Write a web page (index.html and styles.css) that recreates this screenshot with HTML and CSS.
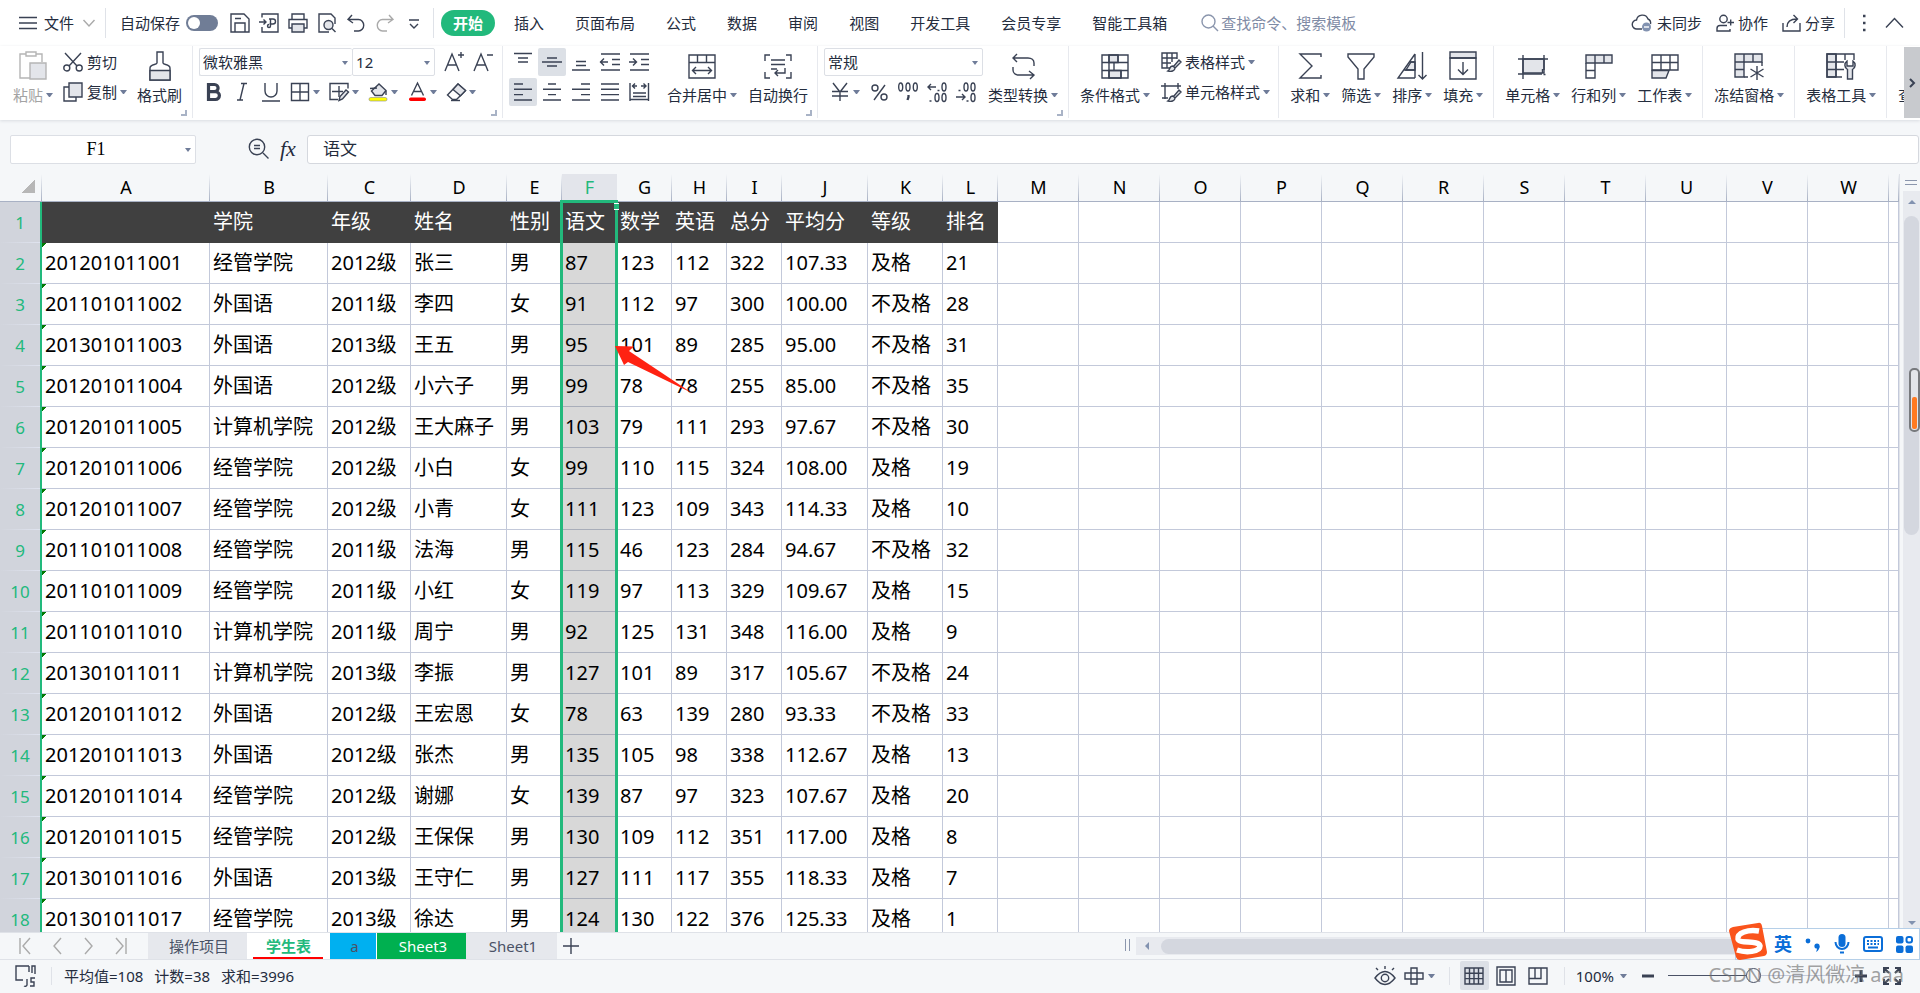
FILE: index.html
```html
<!DOCTYPE html>
<html lang="zh-CN">
<head>
<meta charset="utf-8">
<title>学生表</title>
<link rel="stylesheet" href="styles.css">
</head>
<body>
<header class="topbar">
  <button class="file"><svg class="i" width="20" height="16" viewBox="0 0 20 16"><path d="M1 2.5h18M1 8h18M1 13.5h18"/></svg><span>文件</span><svg class="i faint" width="14" height="10" viewBox="0 0 14 10"><path d="M1.5 2l5.500 6 5.500-6"/></svg></button>
  <span class="sep"></span>
  <label class="autosave">自动保存<input type="checkbox" class="toggle"></label>
  <div class="quick">
    <button aria-label="保存"><svg class="i" width="20" height="20" viewBox="0 0 20 20"><path d="M1 1h13l5 5v13H1zM5 19v-9h10v9M5 5.500h6"/></svg></button>
    <button aria-label="输出为PDF"><svg class="i" width="20" height="20" viewBox="0 0 20 20"><path d="M3 4.500V1h16v18H3v-5M0 9h7M4.500 6.500L7 9l-2.500 2.500M10 6h4a2.500 2.500 0 0 1 0 5h-3.500M11.500 6v7a1.500 1.500 0 1 1-1.500-1.500"/></svg></button>
    <button aria-label="打印"><svg class="i" width="20" height="20" viewBox="0 0 20 20"><path d="M4 6V1h12v5M4 15H1V6.500h18V15h-3"/><path class="f" d="M4 11h12v8H4z"/></svg></button>
    <button aria-label="打印预览"><svg class="i" width="20" height="20" viewBox="0 0 20 20"><path d="M12 19H2V1h12l4 4v6"/><circle class="f" cx="11.500" cy="12" r="4.500"/><path d="M15 15.500l3.500 3.500"/></svg></button>
    <button aria-label="撤销"><svg class="i" width="20" height="20" viewBox="0 0 20 20"><path d="M6 2L2 6.500 7 10M2 6.500h10.500a5 5.500 0 0 1 0 11.500H8"/></svg></button>
    <button aria-label="恢复" class="faint"><svg class="i" width="20" height="20" viewBox="0 0 20 20"><path d="M14 2l4 4.500L13 10M18 6.500H7.500a5 5.500 0 0 0 0 11.500H12"/></svg></button>
    <button aria-label="更多"><svg class="i" width="20" height="20" viewBox="0 0 20 20"><path d="M5 7h10M6 11l4 4 4-4"/></svg></button>
  </div>
  <span class="sep"></span>
  <nav class="tabs">
    <button class="on">开始</button><button>插入</button><button>页面布局</button><button>公式</button><button>数据</button><button>审阅</button><button>视图</button><button>开发工具</button><button>会员专享</button><button>智能工具箱</button>
  </nav>
  <label class="search"><svg class="i" width="18" height="18" viewBox="0 0 18 18"><circle cx="7.500" cy="7.500" r="6.500"/><path d="M12 12l5 5"/></svg><input type="text" placeholder="查找命令、搜索模板" aria-label="查找命令"></label>
  <div class="account">
    <button><svg class="i" width="22" height="18" viewBox="0 0 22 18"><path d="M11 15H6a4.500 4.500 0 0 1-.5-9 6 6 0 0 1 11.500-1 4.500 4.500 0 0 1 2.500 5"/><circle cx="15.500" cy="13" r="4.500" fill="#8292b0" stroke="none"/><path stroke="#fff" d="M13 13h5"/></svg>未同步</button>
    <button><svg class="i" width="18" height="18" viewBox="0 0 18 18"><circle cx="7.500" cy="5" r="3.700"/><path d="M11 11.500H4a3 3 0 0 0-3 3V17h13v-2M11.500 8.500H18M14.700 5.500v6"/></svg>协作</button>
    <button><svg class="i" width="19" height="18" viewBox="0 0 19 18"><path d="M1 9v8h17V9M5 13c0-5 3-8 10-8M11.500 1l4 4-4 4"/></svg>分享</button>
    <span class="sep"></span>
    <button class="dots" aria-label="更多选项"><svg class="i" width="6" height="18" viewBox="0 0 6 18"><path stroke-width="2.500" d="M2 2h2.500M2 9h2.500M2 16h2.500"/></svg></button>
    <button aria-label="收起功能区"><svg class="i" width="19" height="12" viewBox="0 0 19 12"><path d="M1 10.500l8.500-9 8.500 9"/></svg></button>
  </div>
</header>

<section class="ribbon">
  <div class="group clip launch">
    <button class="big dim"><svg class="i" width="28" height="30" viewBox="0 0 28 30"><path d="M7 3H1v24h10M17 3h6v8M7 1h10v4H7z"/><path class="f" d="M11 12h16v16H11z"/></svg><span class="dd">粘贴</span></button>
    <div class="stack">
      <button class="row"><svg class="i" width="20" height="20" viewBox="0 0 20 20"><path d="M2 1l12 13M18 1L6 14"/><circle cx="3.800" cy="16" r="3"/><circle cx="16.200" cy="16" r="3"/></svg><span>剪切</span></button>
      <button class="row"><svg class="i" width="20" height="20" viewBox="0 0 20 20"><path d="M6 5H1v14h12v-4"/><path class="f" d="M6 1h13v14H6z"/></svg><span class="dd">复制</span></button>
    </div>
    <button class="big"><svg class="i" width="24" height="30" viewBox="0 0 24 30"><path d="M9 1h6v11c0 2 7 1 7 5v12H2V17c0-4 7-3 7-5z"/><path class="f" d="M2 19.500h20V29H2z"/></svg><span>格式刷</span></button>
  </div>

  <div class="group font launch">
    <div class="stack">
      <div class="line">
        <span class="pick name"><select aria-label="字体"><option>微软雅黑</option></select></span><span class="pick size"><select aria-label="字号"><option>12</option></select></span>
        <button class="ico grow" aria-label="增大字号"><svg class="i" width="20" height="20" viewBox="0 0 20 20"><path d="M1 19L8 2l7 17M3.500 13h9M17 0v6M14 3h6"/></svg></button>
        <button class="ico" aria-label="减小字号"><svg class="i" width="20" height="20" viewBox="0 0 20 20"><path d="M1 19L8 2l7 17M3.500 13h9M14 3h6"/></svg></button>
      </div>
      <div class="line tools">
        <button class="ico" aria-label="加粗"><svg class="i" width="20" height="20" viewBox="0 0 20 20"><path stroke-width="3.200" d="M5.500 2.500h6a3.600 3.600 0 0 1 0 7.200h-6zM5.500 9.700h7a3.800 3.800 0 0 1 0 7.800h-7z"/></svg></button>
        <button class="ico" aria-label="倾斜"><svg class="i" width="20" height="20" viewBox="0 0 20 20"><path d="M9 1.500h6M5 18h6M12 1.500L8 18"/></svg></button>
        <button class="ico" aria-label="下划线"><svg class="i" width="20" height="20" viewBox="0 0 20 20"><path d="M4 1v8a6 6 0 0 0 12 0V1M1 19h18"/></svg></button>
        <button class="ico dd" aria-label="边框"><svg class="i" width="20" height="20" viewBox="0 0 20 20"><path d="M1.500 1.500h17v17h-17zM10 1.500v17M1.500 10h17"/></svg></button>
        <button class="ico dd" aria-label="绘图边框"><svg class="i" width="20" height="20" viewBox="0 0 20 20"><path d="M9 17.500H1V1.500h18v5M3 9.500h11M10 4v11" /><path class="f" d="M10 18.500l1-4L17 8l2.500 2-6 7z"/></svg></button>
        <button class="ico dd" aria-label="填充颜色"><svg class="i" width="20" height="20" viewBox="0 0 20 20"><path class="f" d="M3.500 9L11 2l7 6.500-4 5H7z"/><path d="M2 6.500l7-.5M18 9v4"/><rect x="1" y="15.500" width="18" height="3.500" rx="1.700" fill="#ff0" stroke="#888" stroke-width=".6"/></svg></button>
        <button class="ico dd" aria-label="字体颜色"><svg class="i" width="20" height="20" viewBox="0 0 20 20"><path d="M4.500 13.500L10.500 1l6 12.500M6.500 9.500h8"/><rect x="2" y="15.500" width="17" height="3.500" rx="1.700" fill="red" stroke="none"/></svg></button>
        <button class="ico dd" aria-label="清除"><svg class="i" width="20" height="20" viewBox="0 0 20 20"><path d="M6.500 17.500L1.500 13 12 2l7.500 6.500-9 9z"/><path class="f" d="M7 7.500L12 2l7.500 6.500-5 5.200z"/><path d="M5 18.500h9"/></svg></button>
      </div>
    </div>
  </div>

  <div class="group align launch">
    <div class="alignset">
      <button aria-label="顶端对齐"><svg class="i" width="20" height="20" viewBox="0 0 20 20"><path d="M1 1.500h18M5 6h10M5 10h10"/></svg></button>
      <button class="on" aria-label="垂直居中"><svg class="i" width="20" height="20" viewBox="0 0 20 20"><path d="M0 10h20M5 6h10M5 14h10"/></svg></button>
      <button aria-label="底端对齐"><svg class="i" width="20" height="20" viewBox="0 0 20 20"><path d="M1 18h18M5 9.500h10M5 13.500h10"/></svg></button>
      <button aria-label="减少缩进"><svg class="i" width="20" height="20" viewBox="0 0 20 20"><path d="M1 2h19M12 7.500h8M12 12.500h8M1 18h19M0 10h8M4 6.500L.5 10 4 13.500"/></svg></button>
      <button aria-label="增加缩进"><svg class="i" width="20" height="20" viewBox="0 0 20 20"><path d="M1 2h19M12 7.500h8M12 12.500h8M1 18h19M0 10h7.500M4 6.500L7.500 10 4 13.500"/></svg></button>
      <button class="on" aria-label="左对齐"><svg class="i" width="20" height="20" viewBox="0 0 20 20"><path d="M1 2h9M1 7.300h18M1 12.600h9M1 18h18"/></svg></button>
      <button aria-label="水平居中"><svg class="i" width="20" height="20" viewBox="0 0 20 20"><path d="M6 2h8M1 7.300h18M6 12.600h8M1 18h18"/></svg></button>
      <button aria-label="右对齐"><svg class="i" width="20" height="20" viewBox="0 0 20 20"><path d="M10 2h9M1 7.300h18M10 12.600h9M1 18h18"/></svg></button>
      <button aria-label="两端对齐"><svg class="i" width="20" height="20" viewBox="0 0 20 20"><path d="M1 2h18M1 7.300h18M1 12.600h18M1 18h18"/></svg></button>
      <button aria-label="分散对齐"><svg class="i" width="20" height="20" viewBox="0 0 20 20"><path d="M1 1v18M19.500 1v18M3 4h5M12 4h5M6 1.500L3.500 4 6 6.500M14.500 1.500L17 4l-2.500 2.500M4 11h13M4 14.500h13M1 17.500h18"/></svg></button>
    </div>
    <button class="big"><svg class="i" width="28" height="30" viewBox="0 0 28 30"><path d="M1 4h26v23H1zM1 11.500h26M9.500 4v7.500M18.500 4v7.500M5 19.500h18M8 16l-3.500 3.500L8 23M20 16l3.500 3.500L20 23"/></svg><span class="dd">合并居中</span></button>
    <button class="big"><svg class="i" width="28" height="30" viewBox="0 0 28 30"><path d="M1 10V4h5M22 4h5v6M1 21v6h5M22 27h5v-6M7 9h14M7 13.500h14M7 18h6M21 17v5H11M14 19l-3 3 3 3"/></svg><span>自动换行</span></button>
  </div>

  <div class="group number launch">
    <div class="stack">
      <div class="line"><span class="pick fmt"><select aria-label="数字格式"><option>常规</option></select></span></div>
      <div class="line tools">
        <button class="ico dd" aria-label="货币"><svg class="i" width="20" height="20" viewBox="0 0 20 20"><path d="M3 1l7 9 7-9M10 9v10M2 9.500h16M2 14h16"/></svg></button>
        <button class="ico" aria-label="百分比"><svg class="i" width="20" height="20" viewBox="0 0 20 20"><circle cx="6" cy="6" r="3"/><circle cx="15" cy="15" r="3"/><path d="M16 3L5 18"/></svg></button>
        <button class="ico" aria-label="千位分隔"><svg class="i" width="20" height="20" viewBox="0 0 20 20"><ellipse cx="2.700" cy="5" rx="2" ry="4"/><ellipse cx="10" cy="5" rx="2" ry="4"/><ellipse cx="17.300" cy="5" rx="2" ry="4"/><path stroke-width="2.300" d="M10.500 13v2l-1 3"/></svg></button>
        <button class="ico" aria-label="增加小数位"><svg class="i" width="20" height="20" viewBox="0 0 20 20"><path d="M1 5h8M4 2L1 5l3 3M10.500 8.500h2M2.500 19h2"/><ellipse cx="17" cy="5" rx="2" ry="4"/><ellipse cx="10" cy="15.500" rx="2" ry="4"/><ellipse cx="17" cy="15.500" rx="2" ry="4"/></svg></button>
        <button class="ico" aria-label="减少小数位"><svg class="i" width="20" height="20" viewBox="0 0 20 20"><path d="M0 15h9M6 12l3 3-3 3M10.500 19h2M2.500 8.500h2"/><ellipse cx="10" cy="5" rx="2" ry="4"/><ellipse cx="17" cy="5" rx="2" ry="4"/><ellipse cx="17" cy="15.500" rx="2" ry="4"/></svg></button>
      </div>
    </div>
    <button class="big"><svg class="i" width="28" height="30" viewBox="0 0 28 30"><path d="M8 3L4 7l4 4M4 7h15c3.500 0 6 2 6 5v3M20 20l5 4-4 4M25 24H10c-3.500 0-6-2-6-5v-3"/></svg><span class="dd">类型转换</span></button>
  </div>

  <div class="group styles">
    <button class="big"><svg class="i" width="28" height="30" viewBox="0 0 28 30"><path class="f" d="M8 4h9v7.500H8zM8 19.500h12V27H8z"/><path d="M1 4h26v23H1zM1 11.500h26M1 19.500h26M8 4v23M17 4v7.500M13 11.500v8M20 19.500V27"/></svg><span class="dd">条件格式</span></button>
    <div class="stack">
      <button class="row"><svg class="i" width="20" height="20" viewBox="0 0 20 20"><path d="M9 16H1V1h15v6M1 6h15M1 11h9M6 1v15M11 1v9"/><path class="f" d="M7 19c2-1 1-5 5-5l2 2c0 3-4 4-7 3zM13 14l5-6 2 2-6 6"/></svg><span class="dd">表格样式</span></button>
      <button class="row"><svg class="i" width="20" height="20" viewBox="0 0 20 20"><path d="M0 4h20M4 1v16M17 1v6M1 16h6"/><path class="f" d="M7 19c2-1 1-5 5-5l2 2c0 3-4 4-7 3zM13 14l5-6 2 2-6 6"/></svg><span class="dd">单元格样式</span></button>
    </div>
  </div>

  <div class="group">
    <button class="big"><svg class="i" width="28" height="30" viewBox="0 0 28 30"><path d="M25 6V3H4l12 12L4 27h21v-3"/></svg><span class="dd">求和</span></button>
    <button class="big"><svg class="i" width="28" height="30" viewBox="0 0 28 30"><path d="M1 3h26v3L17 18v10h-6V18L1 6z"/></svg><span class="dd">筛选</span></button>
    <button class="big"><svg class="i" width="28" height="30" viewBox="0 0 28 30"><path class="f" d="M13 11h4v8H8z"/><path d="M17 3v24M17 3L0 27h17M6 19h11M11.500 11H17M24.500 1v27M20.500 24l4 4 4-4"/></svg><span class="dd">排序</span></button>
    <button class="big"><svg class="i" width="28" height="30" viewBox="0 0 28 30"><path class="f" d="M1 1h26v6H1z"/><path d="M1 7h26v21H1zM14 11v12M9 18.500l5 5 5-5"/></svg><span class="dd">填充</span></button>
  </div>

  <div class="group">
    <button class="big"><svg class="i" width="30" height="30" viewBox="0 0 30 30"><path class="f" d="M5 8h21v14H5z"/><path d="M0 8h30M5 4v24M26 4v15M0 23h24M25.500 23.500h2M24.500 18v4"/></svg><span class="dd">单元格</span></button>
    <button class="big"><svg class="i" width="28" height="30" viewBox="0 0 28 30"><path class="f" d="M1 4h26v8H1z"/><path d="M10 4v23H1V12M19 4v8M1 19.500h9"/></svg><span class="dd">行和列</span></button>
    <button class="big"><svg class="i" width="28" height="30" viewBox="0 0 28 30"><path d="M1 4h26v15H1zM1 11.500h26M10 4v15M19 4v15"/><path class="f" d="M1 19.500h17L15 27H1z"/></svg><span class="dd">工作表</span></button>
  </div>

  <div class="group">
    <button class="big"><svg class="i" width="30" height="30" viewBox="0 0 30 30"><path class="f" d="M1 3h27v8H10v15H1z"/><path d="M10 3v8H1M19 3v8M1 18.500h9M28 11v4M10 26h4M23 15v14M16.500 18l13 8M29.500 18l-13 8"/></svg><span class="dd">冻结窗格</span></button>
  </div>
  <div class="group">
    <button class="big"><svg class="i" width="30" height="30" viewBox="0 0 30 30"><path class="f" d="M1 3h9v23H1z"/><path d="M28 9V3H1v23h15M1 11h17M1 18.500h17M10 3v23M19 3v6"/><path class="f" d="M21 10a5 5 0 0 0 .5 8.500V28h5v-9.500A5 5 0 0 0 27 10v5h-6z"/></svg><span class="dd">表格工具</span></button>
  </div>
  <div class="cut"><span>查</span></div>
  <button class="next" aria-label="向右滚动"><svg class="i" width="6" height="10" viewBox="0 0 6 10"><path stroke-width="2" d="M1 1l4 4-4 4"/></svg></button>
</section>

<section class="formula">
  <span class="pick namebox"><input type="text" value="F1" aria-label="名称框"></span>
  <svg class="i" width="22" height="22" viewBox="0 0 22 22"><circle cx="9" cy="9" r="7.700"/><path d="M15 15l5.500 5.500M6 7.500h6M6 10.500h6"/></svg>
  <button class="fx">fx</button>
  <input class="content" type="text" value="语文" aria-label="编辑栏">
</section>

<main class="sheet">
  <div class="cells">
    <table>
      <colgroup><col class="w42"><col class="w168"><col class="w118"><col class="w83"><col class="w96"><col class="w55"><col class="w55"><col class="w55"><col class="w55"><col class="w55"><col class="w86"><col class="w75"><col class="w55"><col class="w81" span="11"><col></colgroup>
      <thead><tr><th class="corner"><th>A<th>B<th>C<th>D<th>E<th class="sel">F<th>G<th>H<th>I<th>J<th>K<th>L<th>M<th>N<th>O<th>P<th>Q<th>R<th>S<th>T<th>U<th>V<th>W<th></tr></thead>
      <tbody>
      <tr class="title"><th>1<td><td>学院<td>年级<td>姓名<td>性别<td>语文<td>数学<td>英语<td>总分<td>平均分<td>等级<td>排名<td><td><td><td><td><td><td><td><td><td><td><td></tr>
      <tr><th>2<td>201201011001<td>经管学院<td>2012级<td>张三<td>男<td>87<td>123<td>112<td>322<td>107.33<td>及格<td>21<td><td><td><td><td><td><td><td><td><td><td><td></tr>
      <tr><th>3<td>201101011002<td>外国语<td>2011级<td>李四<td>女<td>91<td>112<td>97<td>300<td>100.00<td>不及格<td>28<td><td><td><td><td><td><td><td><td><td><td><td></tr>
      <tr><th>4<td>201301011003<td>外国语<td>2013级<td>王五<td>男<td>95<td>101<td>89<td>285<td>95.00<td>不及格<td>31<td><td><td><td><td><td><td><td><td><td><td><td></tr>
      <tr><th>5<td>201201011004<td>外国语<td>2012级<td>小六子<td>男<td>99<td>78<td>78<td>255<td>85.00<td>不及格<td>35<td><td><td><td><td><td><td><td><td><td><td><td></tr>
      <tr><th>6<td>201201011005<td>计算机学院<td>2012级<td>王大麻子<td>男<td>103<td>79<td>111<td>293<td>97.67<td>不及格<td>30<td><td><td><td><td><td><td><td><td><td><td><td></tr>
      <tr><th>7<td>201201011006<td>经管学院<td>2012级<td>小白<td>女<td>99<td>110<td>115<td>324<td>108.00<td>及格<td>19<td><td><td><td><td><td><td><td><td><td><td><td></tr>
      <tr><th>8<td>201201011007<td>经管学院<td>2012级<td>小青<td>女<td>111<td>123<td>109<td>343<td>114.33<td>及格<td>10<td><td><td><td><td><td><td><td><td><td><td><td></tr>
      <tr><th>9<td>201101011008<td>经管学院<td>2011级<td>法海<td>男<td>115<td>46<td>123<td>284<td>94.67<td>不及格<td>32<td><td><td><td><td><td><td><td><td><td><td><td></tr>
      <tr><th>10<td>201101011009<td>经管学院<td>2011级<td>小红<td>女<td>119<td>97<td>113<td>329<td>109.67<td>及格<td>15<td><td><td><td><td><td><td><td><td><td><td><td></tr>
      <tr><th>11<td>201101011010<td>计算机学院<td>2011级<td>周宁<td>男<td>92<td>125<td>131<td>348<td>116.00<td>及格<td>9<td><td><td><td><td><td><td><td><td><td><td><td></tr>
      <tr><th>12<td>201301011011<td>计算机学院<td>2013级<td>李振<td>男<td>127<td>101<td>89<td>317<td>105.67<td>不及格<td>24<td><td><td><td><td><td><td><td><td><td><td><td></tr>
      <tr><th>13<td>201201011012<td>外国语<td>2012级<td>王宏恩<td>女<td>78<td>63<td>139<td>280<td>93.33<td>不及格<td>33<td><td><td><td><td><td><td><td><td><td><td><td></tr>
      <tr><th>14<td>201201011013<td>外国语<td>2012级<td>张杰<td>男<td>135<td>105<td>98<td>338<td>112.67<td>及格<td>13<td><td><td><td><td><td><td><td><td><td><td><td></tr>
      <tr><th>15<td>201201011014<td>经管学院<td>2012级<td>谢娜<td>女<td>139<td>87<td>97<td>323<td>107.67<td>及格<td>20<td><td><td><td><td><td><td><td><td><td><td><td></tr>
      <tr><th>16<td>201201011015<td>经管学院<td>2012级<td>王保保<td>男<td>130<td>109<td>112<td>351<td>117.00<td>及格<td>8<td><td><td><td><td><td><td><td><td><td><td><td></tr>
      <tr><th>17<td>201301011016<td>外国语<td>2013级<td>王守仁<td>男<td>127<td>111<td>117<td>355<td>118.33<td>及格<td>7<td><td><td><td><td><td><td><td><td><td><td><td></tr>
      <tr><th>18<td>201301011017<td>经管学院<td>2013级<td>徐达<td>男<td>124<td>130<td>122<td>376<td>125.33<td>及格<td>1<td><td><td><td><td><td><td><td><td><td><td><td></tr>
      </tbody>
    </table>
    <div class="selection"></div>
    <svg class="arrow" width="80" height="50" viewBox="0 0 80 50"><path fill="#ff2212" d="M1 2l19 .5-5 4.500L78 49 14 18l-4 3z"/></svg>
  </div>
  <div class="vscroll">
    <span class="split"></span>
    <div class="track"><span class="up"></span><span class="thumb"></span><span class="down"></span></div>
    <div class="meter"><span></span></div>
  </div>
</main>

<footer>
  <div class="sheetbar">
    <div class="nav">
      <button aria-label="第一个"><svg class="i" width="14" height="18" viewBox="0 0 14 18"><path d="M2 1v16M12 1L5 9l7 8"/></svg></button>
      <button aria-label="上一个"><svg class="i" width="14" height="18" viewBox="0 0 14 18"><path d="M11 1L4 9l7 8"/></svg></button>
      <button aria-label="下一个"><svg class="i" width="14" height="18" viewBox="0 0 14 18"><path d="M3 1l7 8-7 8"/></svg></button>
      <button aria-label="最后一个"><svg class="i" width="14" height="18" viewBox="0 0 14 18"><path d="M12 1v16M2 1l7 8-7 8"/></svg></button>
    </div>
    <button class="tab t1">操作项目</button><button class="tab t2">学生表</button><button class="tab t3">a</button><button class="tab t4">Sheet3</button><button class="tab t5">Sheet1</button>
    <button class="add" aria-label="新建工作表"><svg class="i" width="16" height="16" viewBox="0 0 16 16"><path d="M8 0v16M0 8h16"/></svg></button>
    <span class="vsplit"></span>
    <div class="hscroll"><span class="left"></span><span class="thumb"></span></div>
    <div class="ime">
      <svg class="logo" width="40" height="40" viewBox="0 0 40 40"><path fill="#fa541c" d="M5 5L30 1q3-1 4 3l5 26q0 3-3 4L12 38q-3 0-4-3L1 9q0-3 4-4z"/><path fill="none" stroke="#fff" stroke-width="5.500" d="M31 9C20 7 9 11 10 17c1 5 21 1 22 7 0 6-14 7-23 4"/></svg>
      <b>英</b>
      <svg width="16" height="16" viewBox="0 0 16 16" fill="#0b6ed8"><circle cx="3" cy="5" r="2.400"/><circle cx="12" cy="10" r="2.600"/><path d="M14.600 10q0 4-3.600 6 1-2 1-4z"/></svg>
      <svg width="16" height="20" viewBox="0 0 16 20"><rect x="4.500" y="0" width="7" height="13" rx="3.500" fill="#0b6ed8"/><path fill="none" stroke="#0b6ed8" stroke-width="2" d="M1.500 8a6.500 7 0 0 0 13 0M6 18.500h4"/></svg>
      <svg width="20" height="16" viewBox="0 0 20 16" fill="none" stroke="#0b6ed8" stroke-width="2"><rect x="1" y="1" width="18" height="14" rx="2"/><path stroke-dasharray="2 1.500" d="M4 5h12M4 8h12"/><path d="M5 11.500h10"/></svg>
      <svg width="17" height="17" viewBox="0 0 17 17" fill="#0b6ed8"><rect width="7.500" height="7.500" rx="2"/><rect y="9.500" width="7.500" height="7.500" rx="2"/><rect x="9.500" y="9.500" width="7.500" height="7.500" rx="2"/><rect x="10.500" y="1" width="5.500" height="5.500" rx="2" fill="none" stroke="#0b6ed8" stroke-width="2"/></svg>
    </div>
  </div>
  <div class="status">
    <button class="js" aria-label="宏"><svg class="i" width="22" height="24" viewBox="0 0 22 24"><path d="M14 2H1v14h7M5 16h2M14 2v6M17 9V2h3v8M12 15v6a2 2 0 0 1-3 1M20 14h-4v4h3v4h-4"/></svg></button>
    <span class="sep"></span>
    <span class="sum"><span>平均值=108</span><span>计数=38</span><span>求和=3996</span></span>
    <div class="view">
      <button aria-label="护眼模式"><svg class="i" width="20" height="20" viewBox="0 0 20 20"><path d="M0 12q10-13 20 0-10 13-20 0zM10 0v3M1 2l2 2M19 2l-2 2"/><circle cx="10" cy="12" r="3.700"/></svg></button>
      <button class="ico dd" aria-label="阅读模式"><svg class="i" width="20" height="20" viewBox="0 0 20 20"><path d="M7 2h6v16H7zM1 7h18v6H1z"/></svg></button>
      <span class="sep"></span>
      <button class="mode on" aria-label="普通视图"><svg class="i" width="20" height="18" viewBox="0 0 20 18"><path d="M1 1h18v16H1zM1 6.300h18M1 11.600h18M5.500 1v16M10 1v16M14.500 1v16"/></svg></button>
      <button class="mode" aria-label="页面布局"><svg class="i" width="20" height="20" viewBox="0 0 20 20"><path d="M1 1h18v18H1zM4 4h12v12H4zM10 4v12"/></svg></button>
      <button class="mode" aria-label="分页预览"><svg class="i" width="20" height="18" viewBox="0 0 20 18"><path d="M1 1h18v16H1zM1 11.500h12V1M7 1v10.500"/></svg></button>
      <span class="sep"></span>
      <button class="pct dd">100%</button>
      <button class="zo" aria-label="缩小"><svg class="i" width="12" height="12" viewBox="0 0 12 12"><path stroke-width="3" d="M0 6h12"/></svg></button>
      <input class="zoom" type="range" min="0" max="100" value="47" aria-label="显示比例">
      <button class="zo" aria-label="放大"><svg class="i" width="12" height="12" viewBox="0 0 12 12"><path stroke-width="3" d="M0 6h12M6 0v12"/></svg></button>
      <button class="full" aria-label="全屏"><svg class="i" width="18" height="18" viewBox="0 0 18 18"><path stroke-width="2" d="M1 6V1h5M12 1h5v5M17 12v5h-5M6 17H1v-5M1 1l5 5M17 1l-5 5M17 17l-5-5M1 17l5-5"/></svg></button>
    </div>
    <span class="mark">CSDN @清风微凉 aaa</span>
  </div>
</footer>
</body>
</html>
```
FILE: styles.css
```css
*, *::before, *::after { box-sizing: border-box; }
body {
  margin: 0;
  height: 100vh;
  display: flex;
  flex-direction: column;
  overflow: hidden;
  font: 15px/20px "Noto Sans", "Noto Sans CJK SC", sans-serif;
  color: #242c3d;
  background: #f5f7f9;
}
button, input, select { font: inherit; color: inherit; border: 0; padding: 0; margin: 0; background: none; outline: 0; }
button { display: flex; align-items: center; white-space: nowrap; flex: none; }
.i { fill: none; stroke: #3a4254; stroke-width: 1.4; flex: none; overflow: visible; display: block; }
.i .f { fill: #e3e5ea; }
.faint, .faint .i { stroke: #aaa; }
.sep { width: 1px; background: #dfe2e8; flex: none; }

/* dropdown caret */
.dd { display: flex; align-items: center; gap: 3px; }
.dd::after { content: ""; border: 3px solid transparent; border-top: 4px solid #6f7c99; border-bottom: 0; width: 7px; flex: none; }

/* menu bar */
.topbar { height: 46px; flex: none; display: flex; align-items: center; padding: 0 16px 0 18px; background: #fff; }
.topbar .sep { height: 30px; }
.file { gap: 6px; margin-right: 9px; }
.file svg:last-child { margin-left: 2px; }
.autosave { display: flex; align-items: center; gap: 6px; margin-left: 14px; }
.toggle { appearance: none; width: 32px; height: 16px; border-radius: 8px; background: #707d96; display: flex; align-items: center; padding-left: 2px; }
.toggle::before { content: ""; width: 12px; height: 12px; border-radius: 6px; background: #fff; }
.quick { display: flex; gap: 9px; margin: 0 9px 0 12px; }
.tabs { display: flex; align-items: center; gap: 31px; margin-left: 7px; }
.tabs .on { height: 26px; padding: 0 12px; margin-right: -12px; border-radius: 13px; background: #22b97c; color: #fff; font-weight: 700; }
.search { display: flex; align-items: center; gap: 2px; margin-left: 34px; }
.search .i { stroke: #8b96ad; }
.search input { width: 150px; }
.search input::placeholder { color: #7f8ba5; opacity: 1; }
.account { display: flex; align-items: center; gap: 14px; margin-left: auto; }
.account button { gap: 4px; }
.account .sep { margin-left: -5px; }
.account .dots { margin: 0 4px 0 2px; }

/* ribbon */
.ribbon { height: 74px; flex: none; display: flex; background: #fff; box-shadow: 0 1px 3px #d9dce1; position: relative; padding-bottom: 2px; }
.group { position: relative; display: flex; gap: 11px; padding: 0 10px 0 11px; border-right: 1px solid #e7e9ee; flex: none; }
.launch::after { content: ""; position: absolute; right: 5px; bottom: 2px; width: 6px; height: 6px; border: solid #a9b3c6; border-width: 0 2px 2px 0; }
.big { flex-direction: column; justify-content: flex-start; gap: 4px; padding-top: 5px; }
.dim { color: #a3a3a3; }
.dim .i { stroke: #b5b5b5; }
.stack { display: flex; flex-direction: column; gap: 2px; padding-top: 2px; }
.row { height: 28px; gap: 4px; }
.line { display: flex; height: 28px; align-items: center; }
.tools { gap: 9px; padding-left: 6px; }
.ico { height: 28px; }
.clip { padding-left: 13px; gap: 10px; }
.font { padding-left: 6px; padding-right: 9px; }
.font .tools { padding-left: 4px; }
.grow { margin: 0 9px; }
.align { padding: 0 9px 0 6px; }
.alignset { display: grid; grid-template-columns: repeat(5, 28px); gap: 2px 1px; align-content: start; padding-top: 2px; margin-right: 3px; }
.alignset button { width: 28px; height: 28px; justify-content: center; border-radius: 2px; }
.on { background: #dce0e6; }
.number { padding-left: 6px; gap: 5px; }
.styles { padding-right: 8px; }
.pick { position: relative; display: flex; height: 28px; border: 1px solid #dcdfe5; border-radius: 2px; background: #fff; flex: none; }
.pick::after { content: ""; position: absolute; right: 4px; top: 12px; border: 3px solid transparent; border-top: 4px solid #6f7c99; border-bottom: 0; pointer-events: none; }
.pick select, .pick input { appearance: none; width: 100%; padding-left: 3px; }
.name { width: 153px; border-right: 0; }
.size { width: 83px; }
.fmt { width: 159px; }
.cut { flex: 1; min-width: 0; overflow: hidden; padding: 39px 0 0 11px; margin-right: 16px; }
.next { position: absolute; right: 0; top: 1px; width: 16px; height: 71px; background: #c8cace; justify-content: center; }

/* formula bar */
.formula { height: 54px; flex: none; display: flex; align-items: center; padding: 4px 1px 0 10px; }
.formula .pick { width: 186px; height: 29px; margin-right: 52px; }
.namebox input { text-align: center; padding-right: 17px; font: 18px/20px "Liberation Serif", serif; color: #000; }
.fx { width: 20px; margin: 0 7px 0 10px; font: italic 22px/24px "Liberation Serif", serif; }
.content { flex: 1; height: 29px; padding: 0 0 3px 15px; border: 1px solid #d5d8de; border-radius: 3px; background: #fff; font-size: 17px; }

/* worksheet */
.sheet { flex: 1; min-height: 0; display: flex; overflow: hidden; }
.cells { flex: 1; min-width: 0; position: relative; overflow: hidden; border-right: 1px solid #dfe2e8; }
table { table-layout: fixed; border-collapse: separate; border-spacing: 0; width: 100%; font-size: 20px; color: #000; }
.w42 { width: 42px; } .w168 { width: 168px; } .w118 { width: 118px; } .w83 { width: 83px; } .w96 { width: 96px; }
.w55 { width: 55px; } .w86 { width: 86px; } .w75 { width: 75px; } .w81 { width: 81px; }
th { font-weight: 400; padding: 0; }
thead th {
  height: 28px;
  padding-bottom: 2px;
  font-size: 18px;
  border-bottom: 1px solid #a8b1c4;
  background: linear-gradient(#f5f7f9, #a8b1c4) right / 1px 100% no-repeat;
}
thead .sel { color: #22b97c; background: #e3e5eb; }
.corner::after { content: ""; display: block; margin-left: 22px; width: 13px; height: 13px; background: linear-gradient(135deg, transparent 50%, #b7b7b7 50%); }
td { height: 41px; padding: 0 0 0 3px; border: solid #c3c9da; border-width: 0 1px 1px 0; background: #fff; white-space: nowrap; line-height: 28px; }
tbody th { font-size: 17px; color: #22b97c; background: linear-gradient(90deg, #d1d4dc, #dfe3ef) bottom / 100% 1px no-repeat #d1d4dc; border-right: 2px solid #22b97c; }
tbody td:nth-child(2) { background: linear-gradient(135deg, #047a04 3px, #fff 3px); }
tbody td:nth-child(7) { background: #d8d8d8; border-bottom-color: #a8adb9; }
tbody .title td:nth-child(-n+13) { background: #404040; border-color: #404040; color: #fff; }
.selection { position: absolute; left: 560px; top: 26px; bottom: 0; width: 58px; border: 3px solid #22b97c; border-bottom: 0; }
.selection::after { content: ""; position: absolute; right: -4px; top: 0; width: 5px; height: 7px; background: #22b97c; border: solid #fff; border-width: 1px 0; }
.arrow { position: absolute; left: 614px; top: 170px; }

.vscroll { width: 20px; flex: none; display: flex; flex-direction: column; padding-left: 3px; position: relative; }
.split { height: 5px; margin: 6px 3px 6px 2px; border: solid #8b96ad; border-width: 1px 0; flex: none; }
.track { flex: 1; display: flex; flex-direction: column; align-items: center; background: #e8eaef; padding: 9px 1px 7px; }
.up, .down { border: 4px solid transparent; }
.up { border-top: 0; border-bottom-color: #8292b0; }
.down { border-bottom: 0; border-top-color: #8292b0; margin-top: auto; }
.track .thumb { width: 15px; height: 44%; margin-top: 12px; border-radius: 8px; background: #d4d7df; }
.meter { position: absolute; right: 0; top: 194px; width: 11px; height: 64px; padding: 0 1px 1px; border: 2px solid #77797d; border-radius: 5px; background: #e3e5ea; display: flex; align-items: flex-end; }
.meter span { width: 100%; height: 54%; border-radius: 2px; background: #ff7a22; }

/* sheet tabs */
.sheetbar { height: 28px; display: flex; position: relative; border: solid #dfe2e8; border-width: 1px 0; }
.nav { width: 148px; display: flex; align-items: center; gap: 18px; padding-left: 18px; flex: none; }
.nav .i { stroke: #aaa; }
.tab { justify-content: center; padding-left: 3px; background: #e6e8ed; color: #4a5266; }
.t1 { width: 99px; }
.t2 { width: 83px; background: linear-gradient(red, red) 6px 100% / 70px 2px no-repeat #fff; color: #22b97c; font-weight: 700; padding: 0; }
.t3 { width: 47px; background: #00b0f0; border-right: 1px solid #fff; }
.t4 { width: 89px; background: #00b050; color: #fff; }
.t5 { width: 91px; }
.add { margin-left: 6px; }
.vsplit { width: 5px; height: 12px; margin: 6px 6px 0 auto; border: solid #8b96ad; border-width: 0 1px; flex: none; }
.hscroll { width: 784px; margin: 4px 0; display: flex; align-items: center; background: #e8eaef; }
.left { border: 4px solid transparent; border-left: 0; border-right-color: #8292b0; margin: 0 12px 0 9px; }
.hscroll .thumb { flex: 1; height: 15px; border-radius: 8px; background: #d4d7df; }
.ime { position: absolute; right: 0; bottom: -1px; height: 32px; display: flex; align-items: center; gap: 13px; padding: 0 6px 0 38px; background: #fff; border: 1px solid #b5cfe8; color: #0b6ed8; }
.ime b { font-size: 18px; }
.logo { position: absolute; left: -8px; top: -7px; }

/* status bar */
.status { height: 33px; display: flex; align-items: center; padding: 0 19px 2px 15px; position: relative; }
.status .sep { height: 18px; }
.js { margin-right: 14px; }
.sum { display: flex; gap: 11px; margin-left: 12px; }
.view { display: flex; align-items: center; gap: 9px; margin-left: auto; }
.view .dd { gap: 4px; }
.view .sep { margin: 0 1px 0 5px; }
.mode { width: 29px; height: 29px; justify-content: center; border-radius: 2px; margin-right: -6px; }
.view .mode + .sep { margin: 0 2px 0 8px; }
.view .pct { margin-right: 6px; gap: 6px; }
.zoom { appearance: none; width: 182px; height: 16px; margin: 0 0 0 5px; background: linear-gradient(90deg, #4a5266 47%, #c3c9da 47%) center / 100% 1px no-repeat; }
.zoom + .zo { margin-left: -4px; }
.zoom::-webkit-slider-thumb { appearance: none; width: 15px; height: 15px; border-radius: 8px; border: 1px solid #4a5266; background: #f5f7f9; }
.full { margin-left: 7px; }
.mark { position: absolute; right: 16px; top: 3px; font-size: 20px; line-height: 24px; color: rgb(110 110 110 / 65%); }
```
